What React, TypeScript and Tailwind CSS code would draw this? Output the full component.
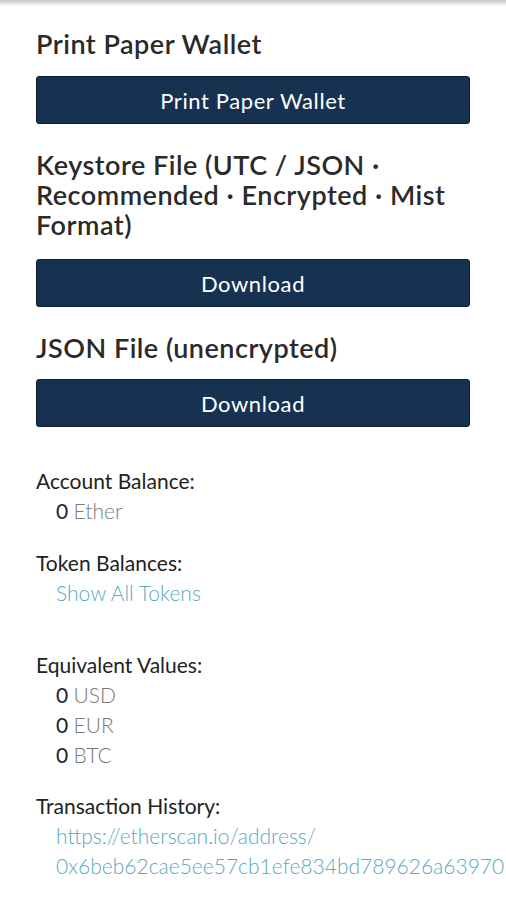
import React from 'react';

const Heading: React.FC<{ children: React.ReactNode; className?: string }> = ({ children, className = '' }) => (
  <h3 className={`text-[27px] leading-[30px] font-semibold text-[#2a2a2a] tracking-[0.5px] ${className}`}>{children}</h3>
);

const DarkButton: React.FC<{ label: string; className?: string }> = ({ label, className = '' }) => (
  <button className={`w-full h-[48px] rounded-[3px] bg-[#173251] border border-[#0c1f35] text-white text-[22px] tracking-[0.6px] ${className}`}>
    {label}
  </button>
);

const Value: React.FC<{ amount: string; unit: string }> = ({ amount, unit }) => (
  <p className="pl-[20px] leading-[30px]">
    <span className="text-[#222]">{amount}</span>{' '}
    <span className="font-light text-[#7a7a7a]">{unit}</span>
  </p>
);

export default function App() {
  return (
    <div className="w-[506px] h-[900px] overflow-hidden bg-white" style={{ fontFamily: 'Lato, "Open Sans", sans-serif' }}>
      <div className="h-[6px] bg-gradient-to-b from-[#c4c4c4] to-white" />
      <div className="px-[36px] pt-[23px]">
        <Heading>Print Paper Wallet</Heading>
        <DarkButton label="Print Paper Wallet" className="mt-[17px]" />

        <Heading className="mt-[26px]">Keystore File (UTC / JSON · Recommended · Encrypted · Mist Format)</Heading>
        <DarkButton label="Download" className="mt-[19px]" />

        <Heading className="mt-[26px]">JSON File (unencrypted)</Heading>
        <DarkButton label="Download" className="mt-[16px]" />

        <div className="mt-[39px] text-[21px] text-[#222]">
          <p className="leading-[30px]">Account Balance:</p>
          <Value amount="0" unit="Ether" />

          <p className="leading-[30px] mt-[22px]">Token Balances:</p>
          <p className="pl-[20px] leading-[30px] text-[#5aa9bd] font-light">Show All Tokens</p>

          <p className="leading-[30px] mt-[42px]">Equivalent Values:</p>
          <Value amount="0" unit="USD" />
          <Value amount="0" unit="EUR" />
          <Value amount="0" unit="BTC" />

          <p className="leading-[30px] mt-[21px]">Transaction History:</p>
          <p className="pl-[20px] leading-[30px] text-[#5aa9bd] font-light whitespace-nowrap">
            https://etherscan.io/address/
            <br />
            0x6beb62cae5ee57cb1efe834bd789626a63970
          </p>
        </div>
      </div>
    </div>
  );
}
